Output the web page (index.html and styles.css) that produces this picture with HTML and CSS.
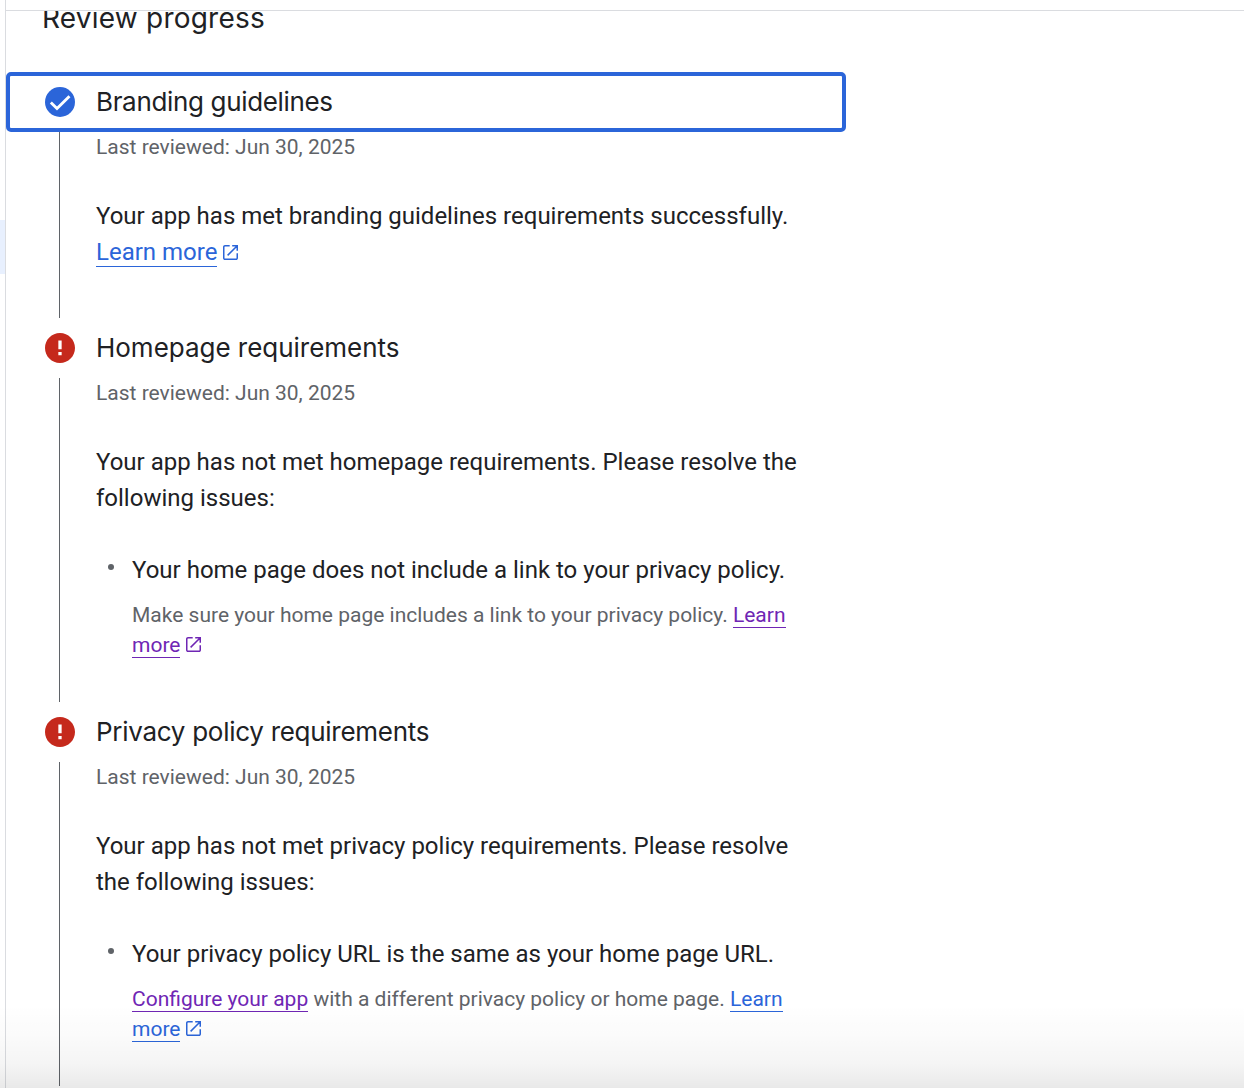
FILE: index.html
```html
<!DOCTYPE html>
<html lang="en">
<head>
<meta charset="utf-8">
<title>Review progress</title>
<link rel="stylesheet" href="styles.css">
</head>
<body>
<svg class="symbols" aria-hidden="true">
  <symbol id="done" viewBox="2 2 20 20"><circle cx="12" cy="12" r="10" fill="currentColor"/><path d="M5.9 12.3 10 16.4 18.3 8.1" fill="none" stroke="#fff" stroke-width="1.9"/></symbol>
  <symbol id="error" viewBox="2 2 20 20"><path fill="currentColor" d="M12 2C6.48 2 2 6.48 2 12s4.48 10 10 10 10-4.48 10-10S17.52 2 12 2zm1.1 14.8h-2.2v-2.1h2.2zm0-3.9h-2.2V7h2.2z"/></symbol>
  <symbol id="open" viewBox="0 0 15 15"><path fill="none" stroke="currentColor" stroke-width="1.5" d="M6.7.75H2A1.25 1.25 0 0 0 .75 2v11A1.25 1.25 0 0 0 2 14.25h11A1.25 1.25 0 0 0 14.25 13V8.3M9.2.75h5.05V5.8M14 1 4.6 10.4"/></symbol>
</svg>
<div class="app">
  <nav class="sidebar"><div class="sidebar-active"></div></nav>
  <main class="panel">
    <h1 class="title">Review progress</h1>
    <section class="step">
      <header class="step-head focused"><svg class="status done"><use href="#done"/></svg><h2 class="t1">Branding guidelines</h2></header>
      <div class="step-body roomy">
        <p class="note">Last reviewed: Jun 30, 2025</p>
        <p class="text">Your app has met branding guidelines requirements successfully.<br><a class="link">Learn more</a><svg class="ext blue"><use href="#open"/></svg></p>
      </div>
    </section>
    <section class="step">
      <header class="step-head"><svg class="status error"><use href="#error"/></svg><h2 class="t2">Homepage requirements</h2></header>
      <div class="step-body">
        <p class="note">Last reviewed: Jun 30, 2025</p>
        <p class="text">Your app has not met homepage requirements. Please resolve the<br>following issues:</p>
        <ul class="issues"><li>
          <p class="issue">Your home page does not include a link to your privacy policy.</p>
          <p class="note hint">Make sure your home page includes a link to your privacy policy. <a class="link visited">Learn</a><br><a class="link visited">more</a><svg class="ext purple"><use href="#open"/></svg></p>
        </li></ul>
      </div>
    </section>
    <section class="step">
      <header class="step-head"><svg class="status error"><use href="#error"/></svg><h2 class="t3">Privacy policy requirements</h2></header>
      <div class="step-body">
        <p class="note">Last reviewed: Jun 30, 2025</p>
        <p class="text">Your app has not met privacy policy requirements. Please resolve<br>the following issues:</p>
        <ul class="issues"><li>
          <p class="issue">Your privacy policy URL is the same as your home page URL.</p>
          <p class="note hint"><a class="link visited">Configure your app</a> with a different privacy policy or home page. <a class="link">Learn</a><br><a class="link">more</a><svg class="ext blue"><use href="#open"/></svg></p>
        </li></ul>
      </div>
    </section>
  </main>
  <div class="fade"></div>
</div>
</body>
</html>
```
FILE: styles.css
```css
* { box-sizing: border-box; }
body, h1, h2, p, ul { margin: 0; padding: 0; }
body {
  height: 1088px;
  overflow: hidden;
  background: #fff;
  color: #202124;
  font: 24px/36px Roboto, sans-serif;
  white-space: nowrap;
}
.symbols { display: none; }
.app { position: relative; display: flex; height: 1088px; }
.sidebar { width: 6px; flex: none; padding-top: 220px; border-right: 1px solid #dadce0; }
.sidebar-active { height: 54px; background: #e8f0fe; }
.panel {
  flex: 1;
  height: 1078px;
  margin-top: 10px;
  border-top: 1px solid #dadce0;
  overflow: hidden;
}
.title {
  height: 72px;
  margin-top: -11px;
  padding-left: 36px;
  font: 400 28px/36px Inter, sans-serif;
  letter-spacing: .22px;
}
.step { width: 840px; }
.step-head {
  display: flex;
  align-items: center;
  gap: 21px;
  height: 60px;
  padding-left: 39px;
}
.step-head h2 { font: 400 26px/36px Inter, sans-serif; }
.focused { padding-left: 35px; border: 4px solid #2b65d9; border-radius: 5px; }
.step-head .t1 { letter-spacing: -.34px; }
.step-head .t2 { letter-spacing: -.02px; }
.step-head .t3 { letter-spacing: -.28px; }
.status { width: 30px; height: 30px; }
.status.done { color: #2b65d9; }
.status.error { color: #c5291c; }
.step-body {
  margin-left: 53px;
  padding: 0 0 42px 36px;
  border-left: 1px solid #5f6368;
}
.step-body.roomy { padding-bottom: 48px; }
.note { color: #5f6368; font-size: 21px; line-height: 30px; }
.text { margin-top: 36px; }
.issues { margin-top: 36px; padding-left: 36px; list-style: none; }
.issue { display: flex; align-items: center; }
.issue::before {
  content: "";
  width: 6px;
  height: 6px;
  margin: -6px 18px 0 -24px;
  border-radius: 50%;
  background: #5f6368;
}
.hint { margin-top: 12px; }
.link { color: #2b65d9; border-bottom: 1px solid; }
.link.visited, .purple { color: #6f26b4; }
.blue { color: #2b65d9; }
.ext { width: 15px; height: 15px; margin-left: 6px; vertical-align: 0; }
.fade {
  position: absolute;
  inset: auto 0 0;
  height: 84px;
  background: linear-gradient(transparent, rgba(0, 0, 0, .015) 35%, rgba(0, 0, 0, .04) 70%, rgba(0, 0, 0, .085));
}
```
